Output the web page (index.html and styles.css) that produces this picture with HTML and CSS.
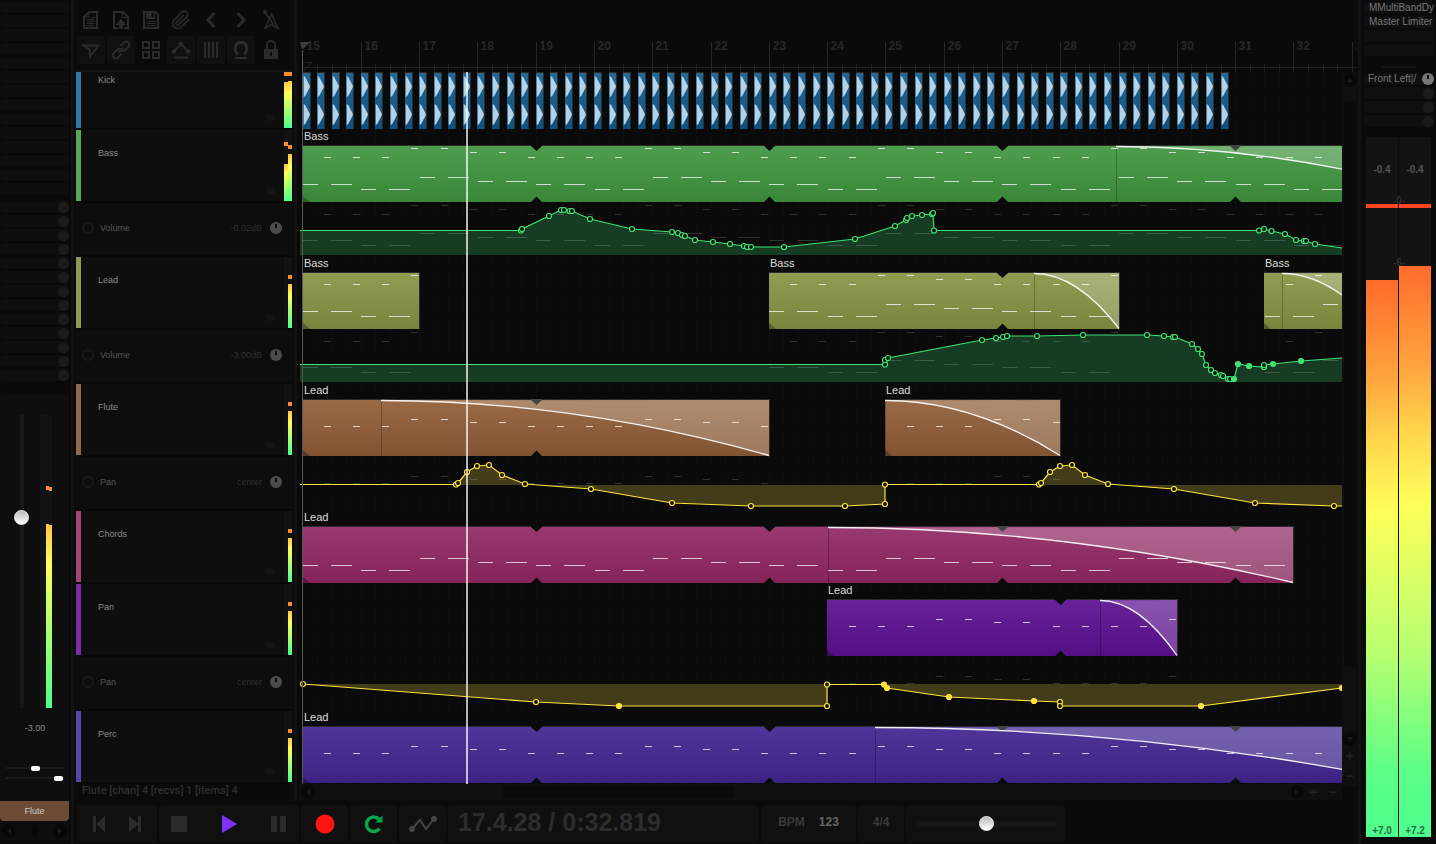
FILE: index.html
```html
<!DOCTYPE html>
<html lang="en">
<head>
<meta charset="utf-8">
<title>Arrangement</title>
<link rel="stylesheet" href="styles.css">
</head>
<body>
<aside class="strip" aria-label="Channel strip">
  <div class="slots" data-slots="14"></div>
  <div class="slots sends" data-slots="13" data-knobs="true"></div>
  <section class="channel">
    <div class="channel-body">
      <input class="fader" type="range" min="0" max="100" value="66" aria-label="Volume">
      <div class="channel-meter">
        <span class="peaks"><i></i><i></i></span>
        <span class="level"><i></i><i></i></span>
      </div>
    </div>
    <output class="readout">-3.00</output>
    <input class="mini" type="range" min="0" max="100" value="50" aria-label="Pan">
    <input class="mini" type="range" min="0" max="100" value="97" aria-label="Width">
  </section>
  <div class="channel-name">Flute</div>
  <div class="strip-scroll">
    <button class="round" aria-label="Scroll left"><svg viewBox="0 0 14 14"><path d="M9 4v6L5 7z"/></svg></button>
    <span></span>
    <button class="round" aria-label="Scroll right"><svg viewBox="0 0 14 14"><path d="M5 4v6l4-3z"/></svg></button>
  </div>
</aside>
<div class="divider"></div>

<main class="main">
  <div class="workspace">
    <section class="tracks">
      <div class="toolbar">
        <button aria-label="New project"><svg viewBox="0 0 28 28"><path class="l2" d="M12 6h8v16H7V11z"/><path class="l1" d="M7 11h5V6M9.500 13.500h8M9.500 15.500h8M9.500 17.500h8M9.500 19.500h8M14 11.500h4"/></svg></button>
        <button aria-label="Open project"><svg viewBox="0 0 28 28"><path class="l2" d="M11 22H7V6h9l5 5v11h-4"/><path class="l1" d="M15.500 6v5.500H21"/><path class="f" d="M14 13l5.500 6H16v4h-4v-4H8.500z"/></svg></button>
        <button aria-label="Save project"><svg viewBox="0 0 28 28"><path class="l2" d="M7 6h11.500L21 8.500V22H7z"/><path class="f" d="M9 6h9v7H9z"/><path class="cut" d="M14.500 7h2v4h-2z"/><path class="l1" d="M9.500 15.500h9M9.500 17.500h9M9.500 19.500h9"/></svg></button>
        <button aria-label="Project settings"><svg viewBox="0 0 28 28"><path class="l2" transform="translate(4 4) scale(.84)" d="M21.440 11.050l-9.190 9.190a6 6 0 0 1-8.490-8.490l9.190-9.190a4 4 0 0 1 5.660 5.660l-9.200 9.190a2 2 0 0 1-2.830-2.830l8.490-8.480"/></svg></button>
        <button aria-label="Undo"><svg viewBox="0 0 28 28"><path class="l3" d="M17.500 7L11 14l6.500 7"/></svg></button>
        <button aria-label="Redo"><svg viewBox="0 0 28 28"><path class="l3" d="M10.500 7l6.500 7-6.500 7"/></svg></button>
        <button aria-label="Metronome"><svg viewBox="0 0 28 28"><path class="l15" d="M14.500 8L8 22.500l6-4 7 4zM8 6l9 13.500"/><circle class="f" cx="8" cy="6" r="2"/></svg></button>
        <button class="on" aria-label="Auto-crossfade"><svg viewBox="0 0 28 28"><path class="l2" d="M6.500 9.500h15L13 20.500l-.5-7z"/></svg></button>
        <button class="on" aria-label="Grouping"><svg viewBox="0 0 28 28"><path class="l2" d="M13.500 10l3.500-3.500a2.900 2.900 0 0 1 4.500 4L18 14a3 3 0 0 1-4.500 0M14.500 18L11 21.500a2.900 2.900 0 0 1-4.500-4L10 14a3 3 0 0 1 4.500 0M11.500 16.500l5-5"/></svg></button>
        <button aria-label="Ripple editing"><svg viewBox="0 0 28 28"><path class="l2" d="M6 6h6v6H6zM16 6h6v6h-6zM6 16h6v6H6zM16 16h6v6h-6z"/></svg></button>
        <button class="on" aria-label="Envelopes move with items"><svg viewBox="0 0 28 28"><path class="l2" d="M7 15.500L14 8l7 7.500M7 21.500h14"/><circle class="f" cx="7" cy="15.500" r="2.300"/><circle class="f" cx="14" cy="8" r="2.300"/><circle class="f" cx="21" cy="15.500" r="2.300"/></svg></button>
        <button class="on" aria-label="Grid lines"><svg viewBox="0 0 28 28"><path class="l2" d="M8 6v16M12 6v16M16 6v16M20 6v16"/></svg></button>
        <button class="on" aria-label="Snap"><svg viewBox="0 0 28 28"><path class="l3" d="M11 18.500C7 15 7 6.500 14 6.500S21 15 17 18.500"/><path class="l2" d="M8 22h12"/></svg></button>
        <button aria-label="Lock"><svg viewBox="0 0 28 28"><path class="l2" d="M10 13V9a4 4 0 0 1 8 0v4"/><path class="f" d="M7 13h14v10H7z"/><path class="cut" d="M13 16h2v4h-2z"/></svg></button>
      </div>
      <div id="track-list"></div>
      <p class="status">Flute [chan] 4 [recvs] 1 [items] 4</p>
    </section>
    <div class="divider inner"></div>

    <section class="arrange">
      <div class="timeline">
        <svg class="ruler" id="ruler" height="72"></svg>
        <div id="lanes"></div>
        <span class="edit-cursor"></span>
        <span class="playhead"></span>
      </div>
      <div class="hscroll">
        <button class="round" aria-label="Left"><svg viewBox="0 0 14 14"><path d="M9 4v6L5 7z"/></svg></button>
        <span class="hthumb"></span>
        <button class="round" aria-label="Right"><svg viewBox="0 0 14 14"><path d="M5 4v6l4-3z"/></svg></button>
        <button class="zoom" aria-label="Zoom in">+</button>
        <button class="zoom" aria-label="Zoom out">−</button>
      </div>
    </section>
    <div class="vscroll">
      <button class="round" aria-label="Up"><svg viewBox="0 0 14 14"><path d="M4 9h6L7 5z"/></svg></button>
      <span class="vthumb"></span>
      <button class="round" aria-label="Down"><svg viewBox="0 0 14 14"><path d="M4 5h6L7 9z"/></svg></button>
      <button class="zoom" aria-label="Zoom in vertically">+</button>
      <button class="zoom" aria-label="Zoom out vertically">−</button>
    </div>
  </div>

  <footer class="transport">
    <div class="panel skip">
      <button aria-label="Go to start"><svg viewBox="0 0 18 18"><path class="f" d="M2 1h3v16H2zM14 1v16L5 9z"/></svg></button>
      <button aria-label="Go to end"><svg viewBox="0 0 18 18"><path class="f" d="M13 1h3v16h-3zM4 1v16l9-8z"/></svg></button>
    </div>
    <div class="panel play">
      <button aria-label="Stop"><svg viewBox="0 0 18 18"><path class="f" d="M1 1h16v16H1z"/></svg></button>
      <button aria-label="Play"><svg viewBox="0 0 18 18"><path fill="#8232ff" d="M2 0l15 9L2 18z"/></svg></button>
      <button aria-label="Pause"><svg viewBox="0 0 18 18"><path class="f" d="M1 1h6v16H1zM10 1h6v16h-6z"/></svg></button>
    </div>
    <button class="panel" aria-label="Record"><svg viewBox="0 0 20 20"><circle cx="10" cy="10" r="9.500" fill="#ff1414"/></svg></button>
    <button class="panel" aria-label="Repeat"><svg viewBox="0 0 20 20"><path d="M15.500 14.500A7.200 7.200 0 1 1 15 5.500" fill="none" stroke="#0aa34e" stroke-width="3.500"/><path d="M18.500 1.500v7h-7z" fill="#0aa34e"/></svg></button>
    <button class="panel" aria-label="Automation"><svg class="wide" viewBox="0 0 30 20"><path d="M4 15l8-9 6 9 7-9" fill="none" stroke="#444" stroke-width="2"/><circle cx="4" cy="15" r="3" fill="#444"/><circle cx="26" cy="5" r="3" fill="#444"/></svg></button>
    <output class="panel time">17.4.28 / 0:32.819</output>
    <label class="panel bpm">BPM <input type="text" value="123"></label>
    <button class="panel sig">4/4</button>
    <div class="panel rate"><input type="range" min="0" max="100" value="50" aria-label="Play rate"></div>
  </footer>
</main>
<div class="divider"></div>

<aside class="master" aria-label="Master">
  <div class="slots">
    <div class="slot">MMultiBandDy</div>
    <div class="slot">Master Limiter</div>
    <div class="slot"></div>
    <div class="slot"></div>
  </div>
  <hr>
  <div class="slots">
    <div class="slot out">Front Left|/<span class="knob lit"></span></div>
    <div class="slot"><span class="knob"></span></div>
    <div class="slot"><span class="knob"></span></div>
    <div class="slot"><span class="knob"></span></div>
  </div>
  <div class="master-meter">
    <div class="col"><span class="peak">-0.4</span><i class="clip"></i><div class="bar left">+7.0</div></div>
    <div class="col"><span class="peak">-0.4</span><i class="clip"></i><div class="bar right">+7.2</div></div>
    <span class="mark zero">-0-</span>
    <span class="mark six">-6-</span>
  </div>
</aside>
<script src="app.js"></script>
</body>
</html>
```

FILE: styles.css
```css
* { box-sizing: border-box; }
body {
  margin: 0;
  min-height: 100vh;
  display: flex;
  background: #0a0a0a;
  color: #8a8a8a;
  font: 9px/12px "Liberation Sans", Arial, sans-serif;
  overflow: hidden;
}
button, input {
  font: inherit;
  color: inherit;
  background: none;
  border: 0;
  padding: 0;
  margin: 0;
}
input[type="range"] { -webkit-appearance: none; appearance: none; }
svg { display: block; }
p, hr { margin: 0; }

.divider { flex: none; width: 3px; margin: 0 1px; background: #121212; }
.divider.inner { margin: 0 3px 0 2px; }

/* Slots shared by the channel strip and the master */
.slots { display: flex; flex-direction: column; gap: 2px; }
.slot {
  height: 12px;
  border-radius: 4px;
  background: #0e0e0e;
  display: flex;
  align-items: center;
  justify-content: flex-end;
}
.knob {
  flex: none;
  width: 11px;
  height: 11px;
  border-radius: 50%;
  background: #1b1b1b;
}
.knob.lit {
  width: 12px;
  height: 12px;
  background: linear-gradient(#0a0a0a, #0a0a0a) 50% 2px / 2px 4px no-repeat #4c4c4c;
}
.master .knob.lit { background-color: #777; }

/* Channel strip */
.strip { flex: none; width: 70px; padding: 1px 1px 0 0; display: flex; flex-direction: column; }
.sends { margin-top: 6px; }
.channel {
  margin-top: 14px;
  padding: 20px 5px 0 6px;
  background: #0e0e0e;
  border-radius: 4px 4px 0 0;
  flex: 1;
  display: flex;
  flex-direction: column;
}
.channel-body { display: flex; justify-content: space-between; padding: 0 12px 0 8px; height: 293px; }
.fader { writing-mode: vertical-lr; direction: rtl; width: 15px; height: 293px; }
.fader::-webkit-slider-runnable-track {
  height: 100%;
  background: linear-gradient(#181818, #181818) center / 4px 100% no-repeat;
}
.fader::-webkit-slider-thumb, .rate input::-webkit-slider-thumb {
  -webkit-appearance: none;
  width: 15px;
  height: 15px;
  border-radius: 50%;
  background: linear-gradient(#bbb, #fff);
  border: 1px solid #f4f4f4;
}
.channel-meter { width: 12px; padding: 71px 0 0 6px; background: #131313; display: flex; flex-direction: column; }
.peaks, .level { display: flex; }
.peaks i { width: 3px; height: 4px; background: #ff8a35; }
.peaks i + i { margin-top: 1px; }
.level { margin-top: 33px; flex: 1; }
.level i { width: 3px; background: linear-gradient(#ffc648, #fdff5a 22%, #4dff8c); }
.level i + i { margin-top: 1px; }
.readout { text-align: center; margin: 14px 0 29px; }
.mini { width: 58px; height: 10px; }
.mini::-webkit-slider-runnable-track {
  height: 10px;
  padding-top: 3px;
  background: linear-gradient(#1a1a1a, #1a1a1a) center / 100% 2px no-repeat;
}
.mini::-webkit-slider-thumb { -webkit-appearance: none; width: 9px; height: 5px; border-radius: 2px; background: #fff; }
.channel-name { height: 20px; line-height: 20px; background: #6d4b35; color: #ccc; text-align: center; border-radius: 0 0 4px 4px; }
.strip-scroll { display: flex; justify-content: space-between; align-items: center; height: 20px; margin-bottom: 3px; padding: 0 2px; background: #0d0d0d; }
.strip-scroll span { width: 5px; height: 12px; background: #070707; }
.round { width: 14px; height: 14px; border-radius: 50%; background: #080808; flex: none; }
.round path { fill: #1c1c1c; }

/* Workspace */
.main { flex: 1; min-width: 0; display: flex; flex-direction: column; }
.workspace { flex: 1; min-height: 0; display: flex; }
.tracks { flex: none; width: 217px; padding-left: 1px; }
.toolbar {
  height: 72px;
  padding: 6px 0 0 1px;
  display: grid;
  grid-template-columns: repeat(7, 28px);
  grid-auto-rows: 28px;
  gap: 2px;
  border-bottom: 2px solid #121212;
}
.toolbar button { border-radius: 3px; }
.toolbar .on { background: #101010; }
.toolbar path { fill: none; stroke: #2b2b2b; }
.toolbar .l1 { stroke-width: 1; }
.toolbar .l15 { stroke-width: 1.5; }
.toolbar .l2 { stroke-width: 2; }
.toolbar .l3 { stroke-width: 3; }
.toolbar .f, .transport .f { fill: #2b2b2b; stroke: none; }
.toolbar .cut { fill: #0a0a0a; stroke: none; }

.track {
  height: 73px;
  border-bottom: 2px solid #080808;
  background: #0e0e0e;
  display: flex;
}
.track.short { height: 58px; }
.track .tint { width: 5px; }
.track .name { flex: 1; padding: 17px 0 0 17px; }
.track.short .name { padding-top: 2px; }
.track .folder { align-self: flex-end; margin: 0 9px 7px 0; fill: #141414; }
.track-meter { width: 8px; background: #131313; display: flex; }
.track-meter .side { flex: 1; display: flex; flex-direction: column; justify-content: flex-end; }
.track-meter .hold { height: 4px; background: #ff8a35; }
.track-meter .fill { background: linear-gradient(#ffc648, #fdff5a 26%, #4dff8c); }
.env-row {
  height: 54px;
  border-bottom: 2px solid #080808;
  background: #0d0d0d;
  display: flex;
  align-items: center;
  padding: 0 10px 2px 6px;
  color: #303030;
}
.env-row .ring { width: 12px; height: 12px; border: 2px solid #191919; border-radius: 50%; }
.env-row .env-name { flex: 1; margin-left: 6px; color: #555; }
.env-row .knob { margin-left: 8px; }
.status { color: #2f2f2f; font: 500 11px/14px Roboto, "Liberation Sans", sans-serif; padding-left: 6px; }

.arrange { flex: 1; min-width: 0; display: flex; flex-direction: column; }
.timeline { position: relative; }
.lane { width: 100%; }
.ruler { width: calc(100% + 15px); }
.ruler text { font: bold 12px "Liberation Sans", Arial, sans-serif; fill: #272727; }
.lane text { font: 11px "Liberation Sans", Arial, sans-serif; fill: #ddd; }
.edit-cursor { position: absolute; left: 2px; top: 50px; bottom: 0; width: 1px; background: #585858; }
.playhead { position: absolute; left: 166px; top: 72px; bottom: 0; width: 2px; background: rgba(255, 255, 255, .7); }
.hscroll { height: 16px; padding-left: 1px; background: #0f0f0f; display: flex; align-items: center; }
.hthumb { width: 232px; height: 12px; margin: 0 auto 0 188px; border-radius: 4px; background: #0a0a0a; }
.zoom { color: #222; font: bold 14px/14px "Liberation Sans", Arial, sans-serif; }
.hscroll .zoom { width: 19px; }
.vscroll { flex: none; width: 15px; margin: 73px 0 15px; background: #0f0f0f; display: flex; flex-direction: column; align-items: center; }
.vthumb { width: 12px; height: 565px; margin: 15px 0 auto; background: #0a0a0a; border-radius: 4px; }
.vscroll .zoom { height: 20px; }

/* Transport */
.transport {
  display: grid;
  grid-template-columns: 80px 140px 47px 47px 47px 311px 95px 46px 160px;
  grid-auto-rows: 37px;
  gap: 2px;
  padding: 4px 0 2px 2px;
}
.panel { background: #101010; border-radius: 4px; display: flex; align-items: center; justify-content: center; color: #2d2d2d; font-weight: bold; font-size: 12px; }
.transport svg { width: 20px; height: 20px; }
.transport .skip, .transport .play { justify-content: space-between; padding: 0 14px; }
.transport .play { padding: 0 11px; }
.transport .play svg { width: 18px; height: 18px; }
.transport .skip svg { width: 18px; height: 18px; }
.transport svg.wide { width: 30px; }
.time { justify-content: flex-start; padding: 0 0 4px 10px; font-size: 25px; }
.bpm { gap: 14px; color: #3a3a3a; padding-bottom: 4px; }
.bpm input { width: 20px; color: #666; }
.sig { color: #3a3a3a; padding-bottom: 4px; }
.rate input { width: 140px; height: 16px; }
.rate input::-webkit-slider-runnable-track { height: 15px; background: linear-gradient(#161616, #161616) center / 100% 6px no-repeat; }

/* Master */
.master { flex: none; width: 74px; padding: 2px 2px 7px; display: flex; flex-direction: column; }
.master .slot { justify-content: space-between; padding-left: 5px; font-size: 10px; background: #0f0f0f; color: #777; white-space: nowrap; }
.master .out { padding-left: 4px; }
.master .knob { margin-left: auto; }
.master hr { width: 35px; height: 2px; margin: 10px auto 5px; border: 0; background: #141414; }
.master-meter {
  position: relative;
  flex: 1;
  margin-top: 10px;
  padding: 0 3px 0 2px;
  display: grid;
  grid-template-columns: 1fr 1fr;
  gap: 1px;
  font-weight: bold;
  font-size: 10px;
}
.master-meter .col { display: flex; flex-direction: column; background: #131313; text-align: center; color: #555; }
.master-meter .peak { padding-top: 27px; }
.master-meter .clip { height: 4px; margin-top: 28px; background: #ff4422; }
.master-meter .bar { flex: 1; display: flex; align-items: flex-end; justify-content: center; color: #2a6a40; background: linear-gradient(#ff6c2c, #ffa23c 17%, #ffda4e 30%, #fdff5a 42%, #b8ff70 67%, #5dff86 88%, #4dff8c); }
.bar.left { margin-top: 72px; }
.bar.right { margin-top: 58px; }
.mark { position: absolute; left: 0; right: 0; text-align: center; color: #303030; }
.mark.zero { top: 58px; }
.mark.six { top: 120px; }
```

FILE: app.js
```js
const BAR = 58.28;       // pixels per bar
const ORIGIN = 302.6;    // x of bar 15
const SCROLL = 300;      // x of the left edge of the timeline
const at = bar => ORIGIN + (bar - 15) * BAR;

const HIGH = [0, 0, 0, 1, 1, 2, 2, 0];
const BASS_HIGH = [27, 18, 22];
const LEAD_HIGH = [42, 35, 38];
const LOW = [54, 59, 47, 51];

const GREEN = { line: '#3fe274', fill: '#163d23' };
const YELLOW = { line: '#ffe340', fill: '#433c18' };

const rows = [
  { name: 'Kick', tint: '#3278a3', kick: true, meter: [[47, 6], [47, 5]] },
  { name: 'Bass', tint: '#57a659', top: '#4e9d4e', bottom: '#3a8739', low: true, high: BASS_HIGH, meter: [[37, 18], [47, 5]],
    items: [{ label: 'Bass', from: 15, to: 35, fade: 1116 }] },
  { env: 'Volume', value: '-0.02dB', color: GREEN, top0: 203, base: 255, ghost: 1,
    points: '300,230.5- 521,230.5 522,229 549,216 561,210 564,210 569.5,211 572,211 590,219 632,229 672,232 678,233 682,235 685,236 695,240 713,242 730,244 744,246 747,247 751,247 784,247 855,239 895,226 906,220 907,218 912,216 922,215 932,214 933,213 934,230.5 1259,230.5 1264,229 1271.5,231 1285,234 1296,240 1304,241 1306,241 1315,244 1342,248- 1400,252-' },
  { name: 'Lead', tint: '#8f9759', top: '#8f9e53', bottom: '#79843c', low: true, high: BASS_HIGH, meter: [null, [44, 5]],
    items: [{ label: 'Bass', from: 15, to: 17 }, { label: 'Bass', from: 23, to: 29, fade: 1034 }, { label: 'Bass', from: 31.5, to: 33.45, fade: 1282, origin: 30.5 }] },
  { env: 'Volume', value: '-3.00dB', color: GREEN, top0: 330, base: 382, ghost: 3,
    points: '300,364.5- 885,364.5 885,360 888,358 982,340 996,338 1003,337 1007,336 1037,336 1083,335 1147,335 1164,336 1173,337 1175,337 1192,344 1198,349 1202,354 1206,365 1211,370 1215,373 1221,375 1223,376 1228,379 1230,379 1234,379* 1238,364* 1249,366* 1264,367 1264,365 1273,364* 1301,361* 1342,358- 1400,354-' },
  { name: 'Flute', tint: '#916a4d', top: '#986a46', bottom: '#835432', high: LEAD_HIGH, meter: [null, [44, 5]],
    items: [{ label: 'Lead', from: 15, to: 23, fade: 381 }, { label: 'Lead', from: 25, to: 28, fade: 885 }] },
  { env: 'Pan', value: 'center', color: YELLOW, top0: 457, base: 485, ghost: 5,
    points: '300,484.5- 456,484.5 458,483 467,472 477,466 489,465 502,475 525,484 591,489 672,503 751,506 845,506 885,504 885,484.5 1039,484.5 1041,483 1050,472 1060,466 1072,465 1085,475 1108,484 1174,489 1255,503 1334,506 1400,506-' },
  { name: 'Chords', tint: '#a34578', top: '#98396f', bottom: '#842459', low: true, meter: [null, [44, 5]],
    items: [{ label: 'Lead', from: 15, to: 32, fade: 828 }] },
  { name: 'Pan', tint: '#7a2ea8', top: '#68229a', bottom: '#540f83', high: LEAD_HIGH, meter: [null, [44, 5]],
    items: [{ label: 'Lead', from: 24, to: 30, fade: 1100 }] },
  { env: 'Pan', value: 'center', color: YELLOW, top0: 657, base: 684, ghost: 8,
    points: '303,684 536,702 619,706* 827,706 827,684.5 884,684.5* 887,688* 949,697* 1034,701* 1060,702 1060,706 1201,706* 1342,688*' },
  { name: 'Perc', tint: '#5a45a8', top: '#50359a', bottom: '#3c2383', high: LEAD_HIGH, meter: [null, [44, 5]],
    items: [{ label: 'Lead', from: 15, to: 34, fade: 875 }] }
];

function noteRects(row, item, shift, color) {
  const start = at(item.origin || item.from), lo = at(item.from), hi = at(item.to);
  let out = '';
  const put = (x, y, w) => {
    const a = Math.max(x, lo), b = Math.min(x + w, hi);
    if (b > a) out += `<rect x="${Math.round(a)}" y="${y}" width="${Math.round(b - a)}" height="1" fill="${color}"/>`;
  };
  for (let bar = 0; start + bar * BAR < hi; bar++) {
    const x = start + bar * BAR;
    if (row.low) {
      const y = LOW[bar % 4] + (shift ? -17 : 0);
      put(x + 0.5, y, 15);
      put(x + 28.5, y, 21);
    }
    if (row.high) {
      [0, 1].forEach(half => {
        const y = row.high[HIGH[(bar * 2 + half) % 8]] + (shift ? -16 : 0);
        put(x + 21.4 + half * BAR / 2, y, 6.5);
      });
    }
  }
  return out;
}

function itemMarkup(row, item, id) {
  const x0 = Math.round(at(item.from)), x1 = Math.round(at(item.to)), w = x1 - x0;
  let s = `<rect x="${x0}" y="15" width="${w + 1}" height="57" fill="#2b2b2b"/>
    <rect x="${x0}" y="16" width="${w}" height="56" fill="url(#${id})"/>
    <path d="M${x0} 66l7 6h-7z" fill="rgba(0,0,0,.3)"/>`;
  if (item.fade) {
    const f = item.fade, c = (f + x1) / 2;
    s += `<path d="M${f} 16.500Q${c} 16.500 ${x1} 72V16z" fill="rgba(255,255,255,.22)"/>
      <path d="M${f + 0.5} 16v56" stroke="rgba(0,0,0,.25)"/>`;
  }
  for (let b = (item.origin || item.from) + 4; b < item.to; b += 4) {
    const x = Math.round(at(b)) + 0.5, top = item.fade && x > item.fade || item.fade < 400 ? '#444' : '#0a0a0a';
    s += `<path d="M${x - 5.5} 15h11v1l-5.500 5-5.500-5z" fill="${top}"/><path d="M${x - 5.5} 72h11l-5.500-5.500z" fill="#0a0a0a"/>`;
  }
  s += noteRects(row, item, false, 'rgba(255,255,255,.72)');
  if (item.fade) {
    const f = item.fade;
    s += `<path d="M${f} 16.500Q${(f + x1) / 2} 16.500 ${x1} 71.500" fill="none" stroke="#fff" stroke-opacity=".9" stroke-width="1.300"/>`;
  }
  return s + `<text x="${x0 + 1}" y="10">${item.label}</text>`;
}

function kickMarkup() {
  let s = '';
  for (let i = 0; i < 64; i++) {
    const x = Math.round(at(15) + i * BAR / 4);
    s += `<rect x="${x}" y="0" width="8" height="57" fill="#2c2c2c"/>
      <rect x="${x}" y="1" width="7" height="56" fill="url(#kick)"/>`;
    [4, 32].forEach(y => {
      s += `<path d="M${x + 0.7} ${y}l1.500 1 4.500 8.500v2l-4.500 8.500-1.500 1z" fill="#b2d2e8"/>`;
    });
  }
  return s;
}

function envMarkup(row) {
  const pts = row.points.split(' ').map(p => {
    const [x, y] = p.replace(/[-*]$/, '').split(',').map(Number);
    return { x, y: y - row.top0, end: p.slice(-1) };
  });
  const base = row.base - row.top0;
  const path = pts.map(p => `${p.x} ${p.y}`).join('L');
  let s = `<path d="M${pts[0].x} ${base}L${path}L${pts[pts.length - 1].x} ${base}z" fill="${row.color.fill}"/>`;
  const src = rows[row.ghost];
  src.items.forEach(item => { s += noteRects(src, item, true, 'rgba(255,255,255,.16)'); });
  s += `<path d="M${path}" fill="none" stroke="${row.color.line}" stroke-width="1.200"/>`;
  pts.forEach(p => {
    if (p.end === '-') return;
    const fill = p.end === '*' ? row.color.line : '#0b120b';
    s += `<circle cx="${p.x}" cy="${p.y}" r="2.500" fill="${fill}" stroke="${row.color.line}" stroke-width="1.200"/>`;
  });
  return s;
}

function gridMarkup(height) {
  let d = '';
  for (let i = 0; i < 160; i++) d += `M${Math.round(at(15) + i * BAR / 4) + 0.5} 0v${height}`;
  return `<path d="${d}" stroke="rgba(255,255,255,.04)" stroke-dasharray="1 2"/>`;
}

function laneMarkup(row, index) {
  const h = row.kick ? 58 : row.env ? 54 : 73;
  const id = 'fill' + index;
  let body = '';
  if (row.kick) {
    body = `<linearGradient id="kick" x2="0" y2="1"><stop stop-color="#256794"/><stop offset="1" stop-color="#0f507e"/></linearGradient>` + kickMarkup();
  } else if (row.env) {
    body = envMarkup(row);
  } else {
    body = `<linearGradient id="${id}" x2="0" y2="1"><stop stop-color="${row.top}"/><stop offset="1" stop-color="${row.bottom}"/></linearGradient>` +
      row.items.map(item => itemMarkup(row, item, id)).join('');
  }
  return `<svg class="lane" height="${h}"><g transform="translate(${-SCROLL} 0)">${gridMarkup(h)}${body}</g></svg>`;
}

function trackMarkup(row) {
  if (row.env) {
    return `<div class="env-row"><span class="ring"></span><span class="env-name">${row.env}</span><span>${row.value}</span><span class="knob lit"></span></div>`;
  }
  const sides = row.meter.map(m => m
    ? `<span class="side"><i class="hold" style="margin-bottom:${m[1]}px"></i><i class="fill" style="height:${m[0]}px"></i></span>`
    : '<span class="side"></span>').join('');
  return `<div class="track${row.kick ? ' short' : ''}"><span class="tint" style="background:${row.tint}"></span><span class="name">${row.name}</span>
    <svg class="folder" width="8" height="7"><path d="M0 0h4l1 1h3v6H0z"/></svg><span class="track-meter">${sides}</span></div>`;
}

function rulerMarkup() {
  let major = '', minor = '', labels = '';
  for (let i = 0; i <= 72; i++) {
    const x = Math.round(at(15) + i * BAR / 4) + 0.5;
    if (i % 4) minor += `M${x} 64v8`;
    else if (i) major += `M${x} 42v30`;
    if (i % 4 === 0) labels += `<text x="${x + 3}" y="50">${15 + i / 4}</text>`;
  }
  return `<g transform="translate(${-SCROLL} 0)">${labels}
    <path d="${major}" stroke="#262626"/><path d="${minor}" stroke="#1f1f1f"/>
    <path d="M303 67.500H4000" stroke="#222"/>
    <path d="M303 62.500h9l-9 9" fill="none" stroke="#252525"/>
    <path d="M300 42h10l-7 7h-1z" fill="#3c3c3c"/></g>`;
}

document.querySelectorAll('[data-slots]').forEach(el => {
  const knob = el.dataset.knobs ? '<span class="knob"></span>' : '';
  el.innerHTML = `<div class="slot">${knob}</div>`.repeat(+el.dataset.slots);
});
document.getElementById('track-list').innerHTML = rows.map(trackMarkup).join('');
document.getElementById('lanes').innerHTML = rows.map(laneMarkup).join('');
document.getElementById('ruler').innerHTML = rulerMarkup();
```
